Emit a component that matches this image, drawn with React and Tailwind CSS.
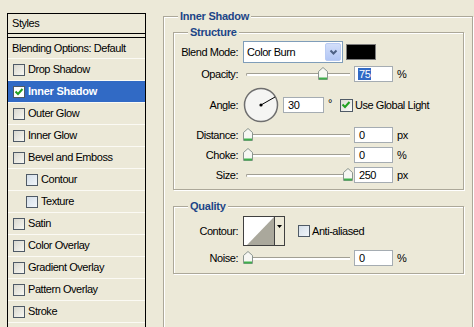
import React from 'react';

const styleRows = [
  { label: 'Drop Shadow' },
  { label: 'Inner Shadow', active: true, checked: true },
  { label: 'Outer Glow' },
  { label: 'Inner Glow' },
  { label: 'Bevel and Emboss' },
  { label: 'Contour', indent: true },
  { label: 'Texture', indent: true },
  { label: 'Satin' },
  { label: 'Color Overlay' },
  { label: 'Gradient Overlay' },
  { label: 'Pattern Overlay' },
  { label: 'Stroke' },
];

function Check({ checked, tint, white }) {
  return (
    <span
      className={`w-[12px] h-[12px] border border-[#4f5a66] flex items-center justify-center shrink-0 ${
        white ? 'bg-white' : tint ? 'bg-gradient-to-br from-[#d5dfe9] to-[#f1f5f9]' : 'bg-gradient-to-br from-[#d9d8cf] to-[#f7f7f2]'
      }`}
    >
      {checked && (
        <svg width="10" height="10" viewBox="0 0 10 10">
          <path d="M1.5 4.5 L4 7 L8.5 2" fill="none" stroke="#21a121" strokeWidth="2" />
        </svg>
      )}
    </span>
  );
}

function Thumb() {
  return (
    <svg width="10" height="13" viewBox="0 0 10 13">
      <path d="M5 0.5 L9.5 4.5 L9.5 12.5 L0.5 12.5 L0.5 4.5 Z" fill="#f7f7f3" stroke="#8a958f" />
      <path d="M1 11.5 L9 11.5" stroke="#3fae4a" strokeWidth="2" />
    </svg>
  );
}

function Slider({ value }) {
  return (
    <div className="relative w-[107px] h-[16px] shrink-0">
      <div className="absolute left-[3px] right-0 top-[7px] h-[3px] rounded-l-full border-t border-l border-[#a19f93] bg-white" />
      <div className="absolute top-[1px]" style={{ left: `${value}px` }}>
        <Thumb />
      </div>
    </div>
  );
}

function Field({ value, selected, w = 'w-[39px]' }) {
  return (
    <div className={`${w} h-[16px] border border-[#a5acb2] bg-white flex items-center pl-[3px] shrink-0`}>
      <span className={selected ? 'bg-[#316ac5] text-white leading-[12px] px-[1px]' : 'leading-[12px] px-[1px]'}>{value}</span>
    </div>
  );
}

function Label({ children }) {
  return <div className="w-[64px] text-right shrink-0 mr-[5px]">{children}</div>;
}

function SliderRow({ label, value, unit, selected, className }) {
  return (
    <div className={`flex items-center h-[16px] ${className}`}>
      <Label>{label}</Label>
      <Slider value={value} />
      <div className="ml-[4px]">
        <Field value={String(value === 100 ? 250 : value)} selected={selected} />
      </div>
      <span className="ml-[4px]">{unit}</span>
    </div>
  );
}

function Group({ title, className, children }) {
  return (
    <div className={`relative border border-[#aca899] shadow-[inset_1px_1px_0_#fff,1px_1px_0_#fff] ${className}`}>
      <span className="absolute -top-[7px] left-[14px] px-[2px] bg-[#ece9d8] font-bold tracking-[-0.25px] text-[#1c4587] leading-[13px]">
        {title}
      </span>
      {children}
    </div>
  );
}

export default function App() {
  return (
    <div className="w-[474px] h-[327px] bg-[#ece9d8] overflow-hidden flex font-['Liberation_Sans',Arial,sans-serif] text-[11px] tracking-[-0.45px] text-black">
      {/* Styles list */}
      <div className="ml-[7px] mt-[13px] w-[139px] h-[330px] border-x border-t border-black flex flex-col shrink-0">
        <div className="h-[20px] border-b border-black flex items-center pl-[4px]">Styles</div>
        <div className="h-[3px]" />
        <div className="h-[22px] border-t border-black border-b border-b-[#fbfaf4] flex items-center pl-[4px]">
          Blending Options: Default
        </div>
        {styleRows.map((row) => (
          <div
            key={row.label}
            className={`h-[22px] border-b border-[#fbfaf4] flex items-center gap-[3px] ${row.indent ? 'pl-[18px]' : 'pl-[5px]'} ${
              row.active ? 'bg-[#316ac5] text-white font-bold tracking-[-0.25px]' : ''
            }`}
          >
            <Check checked={row.checked} tint={row.indent} white={row.active} />
            <span>{row.label}</span>
          </div>
        ))}
      </div>

      {/* Settings */}
      <div className="pl-[17px] pt-[16px] shrink-0">
        <Group title="Inner Shadow" className="w-[310px] h-[330px] pl-[9px] pt-[15px]">
          <Group title="Structure" className="w-[291px] h-[158px] pt-[8px]">
            <div className="flex items-center h-[22px]">
              <Label>Blend Mode:</Label>
              <div className="w-[100px] h-[22px] border border-[#7f9db9] bg-white flex items-center justify-between pl-[3px] pr-[1px]">
                <span>Color Burn</span>
                <div className="w-[16px] h-[18px] rounded-[2px] border border-[#b9cbf3] bg-gradient-to-b from-[#d3def9] to-[#b2c6f5] flex items-center justify-center">
                  <svg width="9" height="7" viewBox="0 0 9 7">
                    <path d="M1.5 1.5 L4.5 4.5 L7.5 1.5" fill="none" stroke="#4d6185" strokeWidth="2" />
                  </svg>
                </div>
              </div>
              <div className="ml-[3px] w-[30px] h-[16px] bg-black border border-[#7d7d7d]" />
            </div>

            <SliderRow label="Opacity:" value={75} unit="%" selected className="mt-[3px]" />

            <div className="flex items-center h-[36px] mt-[5px]">
              <Label>Angle:</Label>
              <svg width="36" height="36" viewBox="0 0 36 36" className="shrink-0">
                <circle cx="18" cy="18" r="16.5" fill="#f5f5f3" stroke="#6f6f6f" strokeWidth="1.5" />
                <line x1="18" y1="18" x2="32" y2="10" stroke="#000" strokeWidth="1" />
                <circle cx="18" cy="18" r="1.6" fill="#000" />
              </svg>
              <div className="ml-[4px]">
                <Field value="30" w="w-[41px]" />
              </div>
              <span className="ml-[4px] self-start mt-[8px]">°</span>
              <div className="ml-[8px] flex items-center gap-[2px]">
                <span className="w-[13px] h-[13px] border border-[#4f5a66] bg-gradient-to-br from-[#dcdbd3] to-[#fbfbf8] flex items-center justify-center">
                  <svg width="10" height="10" viewBox="0 0 10 10">
                    <path d="M1.5 4.5 L4 7 L8.5 2" fill="none" stroke="#21a121" strokeWidth="2" />
                  </svg>
                </span>
                <span>Use Global Light</span>
              </div>
            </div>

            <SliderRow label="Distance:" value={0} unit="px" className="mt-[4px]" />
            <SliderRow label="Choke:" value={0} unit="%" className="mt-[4px]" />
            <SliderRow label="Size:" value={100} unit="px" className="mt-[4px]" />
          </Group>

          <Group title="Quality" className="w-[291px] h-[68px] mt-[16px] pt-[9px]">
            <div className="flex items-center h-[30px]">
              <Label>Contour:</Label>
              <div className="flex h-[30px] border border-[#404040] bg-white">
                <svg width="30" height="28" viewBox="0 0 30 28">
                  <polygon points="3,28 30,0 30,28" fill="#aaa89c" />
                </svg>
                <div className="w-[10px] border-l border-[#404040] bg-[#ece9d8] flex justify-center pt-[8px]">
                  <svg width="5" height="3" viewBox="0 0 5 3">
                    <polygon points="0,0 5,0 2.5,3" fill="#000" />
                  </svg>
                </div>
              </div>
              <div className="ml-[13px] flex items-center gap-[2px]">
                <Check tint />
                <span>Anti-aliased</span>
              </div>
            </div>
            <SliderRow label="Noise:" value={0} unit="%" className="mt-[4px]" />
          </Group>
        </Group>
      </div>
    </div>
  );
}
